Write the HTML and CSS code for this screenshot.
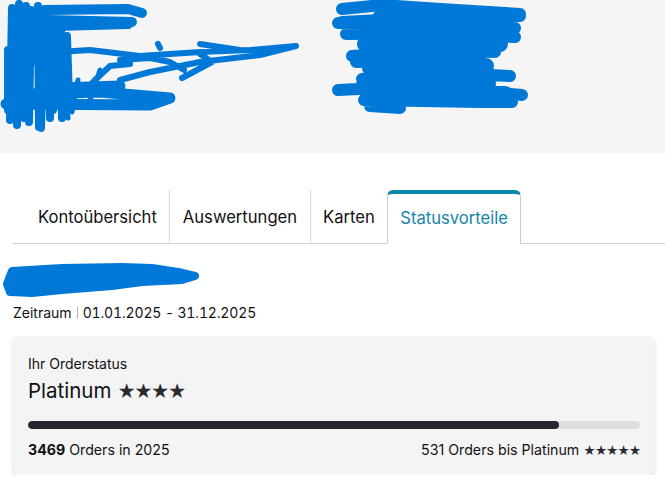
FILE: index.html
```html
<!DOCTYPE html>
<html lang="de">
<head>
<meta charset="utf-8">
<title>Statusvorteile</title>
<link rel="stylesheet" href="styles.css">
</head>
<body>
<header class="top">
  <svg class="scribble" width="665" height="153" viewBox="0 0 665 153" aria-hidden="true">
    <g fill="none" stroke="#0078d7" stroke-linecap="round" stroke-linejoin="round">
      <path stroke-width="8" d="M12 8 L10 120 M19 4 L17 125 M26 6 L24 118 M31 10 L29 122 M38 6 L39 127 M44 12 L41 128 M49 20 L50 118 M55 30 L53 110 M61 30 L62 118 M67 36 L69 100 M18 30 L60 28 M14 60 L50 62 M8 50 L8 110"/>
      <path stroke-width="10" d="M44 10 L128 9 L142 13 M48 20 L132 22 M56 26 L128 24"/>
      <path stroke-width="6" d="M10 55 L90 50 L140 56 L200 52 L250 50 L296 46 L260 55 L200 62 L150 72 L120 80 M200 44 L240 50 M120 60 L150 58 L170 62 L184 70 M200 54 L212 62 L182 78 M130 64 L110 66 L95 80 L82 95 M160 48 L158 44"/>
      <path stroke-width="11" d="M6 104 L150 105 L170 98 L100 92 L30 94 M60 88 L120 86"/>
      <path stroke-width="5" d="M78 80 L72 112 M100 70 L90 100 M66 100 L68 118"/>
      <path stroke-width="12" d="M342 9 L382 5 L440 9 L520 14 M342 22 L420 18 L520 16 M338 23 L460 24 L515 28 M346 34 L440 33 L515 37 M350 30 L470 30 M352 56 L430 50 L495 52 M356 62 L480 60 M362 79 L430 72 L510 76 M362 84 L490 84 M338 90 L420 86 L522 95 M364 100 L480 102 L512 102 M370 106 L400 108"/>
      <path stroke-width="16" d="M365 44 L500 44 M370 68 L486 66 M368 94 L505 94 M380 18 L505 20"/>
    </g>
  </svg>
</header>

<nav class="tabs">
  <a class="tab tab-first">Kontoübersicht</a>
  <a class="tab">Auswertungen</a>
  <a class="tab">Karten</a>
  <a class="tab tab-active">Statusvorteile</a>
</nav>

<section class="account">
  <svg class="scribble-small" width="200" height="38" viewBox="0 0 200 38" aria-hidden="true">
    <g fill="#0078d7" stroke="#0078d7" stroke-linecap="round" stroke-linejoin="round">
      <path stroke-width="8" d="M10 9 L60 6 L120 5 L150 6 L176 10 L193 14 L180 18 L140 20 L110 24 L60 28 L30 31 L8 30 L5 22 L8 14 Z"/>
    </g>
  </svg>
  <p class="period"><span class="period-label">Zeitraum</span><span class="period-sep"></span><span class="period-dates">01.01.2025 - 31.12.2025</span></p>
</section>

<section class="card">
  <p class="card-kicker">Ihr Orderstatus</p>
  <h2 class="card-title">Platinum <span class="stars">★★★★</span></h2>
  <div class="progress"><div class="progress-fill" style="width: 86.7%"></div></div>
  <div class="card-foot">
    <span><strong>3469</strong> Orders in 2025</span>
    <span>531 Orders bis Platinum <span class="stars-small">★★★★★</span></span>
  </div>
</section>
</body>
</html>
```

FILE: styles.css
```css
* { box-sizing: border-box; }

html, body {
  margin: 0;
  padding: 0;
  background: #ffffff;
}

body {
  font-family: "Inter", "Liberation Sans", sans-serif;
  color: #111114;
  width: 665px;
  overflow: hidden;
}

.top {
  height: 153px;
  background: #f5f5f5;
}

.scribble { display: block; }

.tabs {
  display: flex;
  margin: 37px 0 0 13px;
  border-bottom: 1px solid #d3d3d3;
  height: 54px;
}

.tab {
  display: flex;
  align-items: center;
  padding: 0 12.5px;
  height: 53px;
  font-size: 16.6px;
  color: #111114;
  border-left: 1px solid #d9d9d9;
}

.tab-first {
  border-left: none;
  padding-left: 25px;
}

.tab-active {
  color: #1685a8;
  background: #ffffff;
  border: 1px solid #cccccc;
  border-top: 4px solid #0a86a8;
  border-bottom: none;
  border-radius: 6px 6px 0 0;
  height: 54px;
  padding: 0 12px 3px;
  margin-bottom: -1px;
}

.account {
  padding: 18px 0 0 0;
}

.scribble-small {
  display: block;
  margin-left: 2px;
}

.period {
  margin: 3px 0 0 13px;
  font-size: 14px;
  line-height: 20px;
  display: flex;
  align-items: center;
}

.period-label { color: #111114; }

.period-dates {
  font-variant-numeric: tabular-nums;
  letter-spacing: -0.15px;
}

.period-sep {
  display: inline-block;
  width: 1px;
  height: 12px;
  background: #b5b5b5;
  margin: 0 5px;
}

.card {
  margin: 14px 10px 0 13px;
  background: #f4f4f4;
  border-radius: 5px;
  box-shadow: 0 1px 3px rgba(0, 0, 0, 0.18);
  padding: 18px 15px 15px;
}

.card-kicker {
  margin: 0;
  font-size: 14px;
  line-height: 18px;
}

.card-title {
  margin: 5px 0 0;
  font-size: 20.5px;
  line-height: 26px;
  font-weight: 400;
}

.stars {
  font-size: 18px;
  color: #2a2a32;
  letter-spacing: -2px;
}

.progress {
  margin-top: 16px;
  height: 8px;
  border-radius: 4px;
  background: #dedede;
  overflow: hidden;
}

.progress-fill {
  height: 100%;
  background: #272630;
  border-radius: 4px;
}

.card-foot {
  margin-top: 12px;
  display: flex;
  justify-content: space-between;
  font-size: 14.2px;
  line-height: 18px;
}

.card-foot strong { font-weight: 700; }

.stars-small {
  font-size: 12px;
  color: #2a2a32;
  letter-spacing: -1.2px;
}
```
